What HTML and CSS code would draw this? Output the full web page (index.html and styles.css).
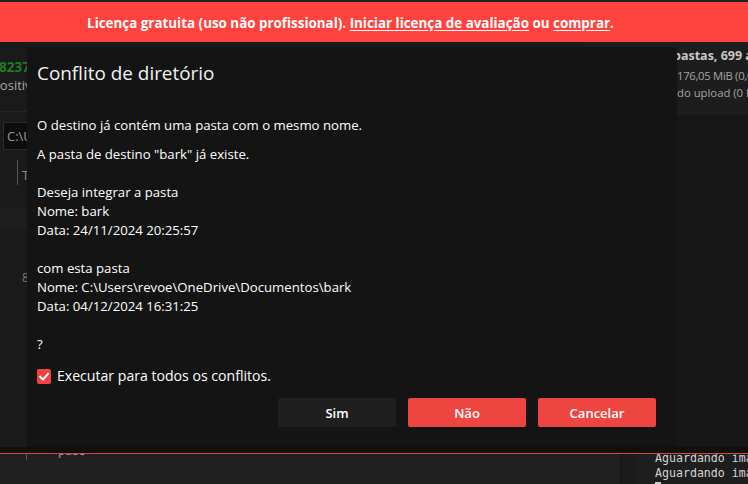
FILE: index.html
```html
<!DOCTYPE html>
<html lang="pt">
<head>
<meta charset="utf-8">
<title>Conflito de diretório</title>
<link rel="stylesheet" href="styles.css">
</head>
<body>
<div class="app">
  <div class="banner">
    <span class="banner-text">Licença gratuita (uso não profissional). <a class="banner-link" href="#">Iniciar licença de avaliação</a> ou <a class="banner-link" href="#">comprar</a>.</span>
  </div>
  <div class="workspace">
    <div class="panes">
      <div class="leftpane">
        <div class="lp-count">8237 arquivos</div>
        <div class="lp-label">Dispositivo</div>
        <div class="lp-rule"></div>
        <div class="lp-input">C:\Users\revoe</div>
        <div class="lp-tab"><span class="lp-bar"></span><span class="lp-tabtext">Transferências</span></div>
        <div class="lp-band"></div>
        <div class="lp-num">8</div>
      </div>
      <div class="splitter"></div>
      <div class="rightpane">
        <div class="stats">
          <div class="st-line st-bold">pastas, 699 arquivos</div>
          <div class="st-line st-two">176,05 MiB (0,0 B/s)</div>
          <div class="st-line st-three">do upload (0 B)</div>
        </div>
        <div class="rp-body"></div>
      </div>
    </div>
    <div class="strip"></div>
    <div class="console">
      <div class="gutter"></div>
      <div class="gutter-line"></div>
      <div class="code"><div class="code-line">pass</div></div>
      <div class="divider"></div>
      <div class="log">
        <div class="log-line">Aguardando imagem...</div>
        <div class="log-line">Aguardando imagem...</div>
        <div class="log-line"><span class="cursor"></span></div>
      </div>
    </div>

    <div class="dialog">
      <div class="dlg-title">Conflito de diretório</div>
      <p class="dlg-lead">O destino já contém uma pasta com o mesmo nome.</p>
      <div class="dlg-body">
        <div class="ln">A pasta de destino "bark" já existe.</div>
        <div class="ln"></div>
        <div class="ln">Deseja integrar a pasta</div>
        <div class="ln">Nome: bark</div>
        <div class="ln">Data: 24/11/2024 20:25:57</div>
        <div class="ln"></div>
        <div class="ln">com esta pasta</div>
        <div class="ln">Nome: C:\Users\revoe\OneDrive\Documentos\bark</div>
        <div class="ln">Data: 04/12/2024 16:31:25</div>
        <div class="ln"></div>
        <div class="ln">?</div>
      </div>
      <label class="dlg-check">
        <span class="box"><svg width="14" height="15" viewBox="0 0 14 15"><polyline points="3.2,7.8 6,10.6 11,4.8" fill="none" stroke="#ffffff" stroke-width="2" stroke-linecap="square"/></svg></span>
        <span class="check-label">Executar para todos os conflitos.</span>
      </label>
      <div class="dlg-buttons">
        <button class="btn btn-dark">Sim</button>
        <button class="btn btn-red">Não</button>
        <button class="btn btn-red">Cancelar</button>
      </div>
    </div>
  </div>
</div>
</body>
</html>
```
FILE: styles.css
```css
* { box-sizing: border-box; }
html, body { margin: 0; padding: 0; }
body {
  width: 748px;
  height: 484px;
  overflow: hidden;
  background: #1a1a1a;
  font-family: "Open Sans", "Noto Sans", sans-serif;
  color: #fff;
}
.app {
  display: flex;
  flex-direction: column;
  height: 484px;
}
.banner {
  height: 42px;
  border-top: 2px solid #202020;
  background: #fe423d;
  display: flex;
  align-items: center;
  justify-content: center;
  padding-right: 47px;
  flex-shrink: 0;
}
.banner-text {
  font-weight: 700;
  font-size: 13.4px;
  color: #fff;
  padding-top: 1px;
}
.banner-link {
  color: #fff;
  text-decoration: underline;
  text-underline-offset: 2px;
}
.workspace {
  position: relative;
  flex: 1;
  display: flex;
  flex-direction: column;
  overflow: hidden;
}
.panes {
  height: 405px;
  display: flex;
  flex-shrink: 0;
}
.leftpane {
  width: 581px;
  flex-shrink: 0;
  overflow: hidden;
  background: #1a1a1a;
  display: flex;
  flex-direction: column;
  padding-top: 16px;
  white-space: nowrap;
}
.lp-count {
  font-weight: 700;
  font-size: 13.5px;
  line-height: 18px;
  color: #1f7d22;
  margin-left: -1px;
}
.lp-label {
  font-size: 13px;
  line-height: 18px;
  color: #a8a8a8;
  margin-left: -27px;
}
.lp-rule {
  height: 1px;
  background: #262626;
  margin-top: 17px;
}
.lp-input {
  margin: 10px 0 0 3px;
  height: 28px;
  width: 200px;
  border: 1px solid #2b2b2b;
  background: #0d0d0d;
  color: #9a9a9a;
  font-size: 13px;
  line-height: 26px;
  padding-left: 3px;
}
.lp-tab {
  margin: 10px 0 0 17px;
  height: 25px;
  display: flex;
  align-items: center;
  gap: 4px;
}
.lp-bar {
  width: 1px;
  height: 25px;
  background: #555;
}
.lp-tabtext {
  font-size: 13px;
  color: #8a8a8a;
  padding-top: 4px;
}
.lp-band {
  height: 20px;
  background: #1e1e1e;
  margin-top: 23px;
}
.lp-num {
  font-size: 12px;
  line-height: 16px;
  color: #777;
  margin: 42px 0 0 22px;
}
.splitter {
  width: 4px;
  flex-shrink: 0;
  background: #1a1a1a;
}
.rightpane {
  flex: 1;
  min-width: 0;
  display: flex;
  flex-direction: column;
  background: #171717;
  overflow: hidden;
  white-space: nowrap;
}
.stats {
  height: 73px;
  background: #1d1d1d;
  padding: 5px 0 0 88px;
}
.st-line {
  font-size: 11.3px;
  color: #a4a4a4;
  line-height: 16px;
}
.st-bold {
  font-weight: 700;
  font-size: 12.5px;
  color: #c8c8c8;
  line-height: 18px;
}
.st-two { margin: 3px 0 0 4px; letter-spacing: -0.3px; }
.st-three { margin: 1px 0 0 4px; }
.rp-body { flex: 1; }
.strip {
  height: 6px;
  background: #101010;
  border-bottom: 1px solid #d8403b;
  flex-shrink: 0;
  box-sizing: content-box;
}
.console {
  flex: 1;
  display: flex;
  overflow: hidden;
  background: #202020;
  font-family: "DejaVu Sans Mono", "Liberation Mono", monospace;
  font-size: 11.6px;
  line-height: 15px;
}
.gutter { width: 26px; flex-shrink: 0; }
.gutter-line {
  width: 1px;
  height: 6px;
  flex-shrink: 0;
  background: #555;
}
.code {
  width: 593px;
  flex-shrink: 0;
  padding-left: 31px;
}
.code-line {
  color: #c586c0;
  margin-top: -10px;
}
.divider {
  width: 15px;
  flex-shrink: 0;
  background: #1b1b1b;
  border-left: 1px solid #151515;
}
.log {
  flex: 1;
  min-width: 0;
  overflow: hidden;
  background: #1e1e1e;
  padding-left: 20px;
  white-space: nowrap;
  color: #d4d4d4;
}
.log-line:first-child { margin-top: -3px; }
.cursor {
  display: inline-block;
  width: 6px;
  height: 11px;
  background: #cfcfcf;
  vertical-align: -1px;
}

/* dialog */
.dialog {
  position: absolute;
  left: 27px;
  top: 5px;
  width: 650px;
  height: 400px;
  background: #141414;
  padding: 13px 21px 20px 10px;
  display: flex;
  flex-direction: column;
}
.dlg-title {
  font-size: 18.9px;
  line-height: 26px;
  color: #f2f2f2;
  margin-bottom: 30px;
}
.dlg-lead {
  margin: 0 0 10px 0;
  font-size: 13.2px;
  line-height: 19px;
  color: #fff;
}
.dlg-body {
  font-size: 13.2px;
  line-height: 19px;
  color: #fff;
  margin-bottom: 12px;
}
.ln { height: 19px; white-space: nowrap; }
.dlg-check {
  display: flex;
  align-items: center;
  gap: 6px;
  height: 20px;
  margin-bottom: 12px;
}
.box {
  width: 14px;
  height: 15px;
  background: #ef4540;
  border-radius: 2px;
  display: flex;
}
.check-label {
  font-size: 14.1px;
  line-height: 20px;
  color: #fff;
}
.dlg-buttons {
  display: flex;
  justify-content: flex-end;
  gap: 12px;
}
.btn {
  width: 118px;
  height: 29px;
  border: none;
  border-radius: 2px;
  font-family: "Open Sans", "Noto Sans", sans-serif;
  font-weight: 600;
  font-size: 13px;
  color: #fff;
  padding: 0;
}
.btn-dark { background: #1f1f1f; }
.btn-red { background: #ef4540; }
```
